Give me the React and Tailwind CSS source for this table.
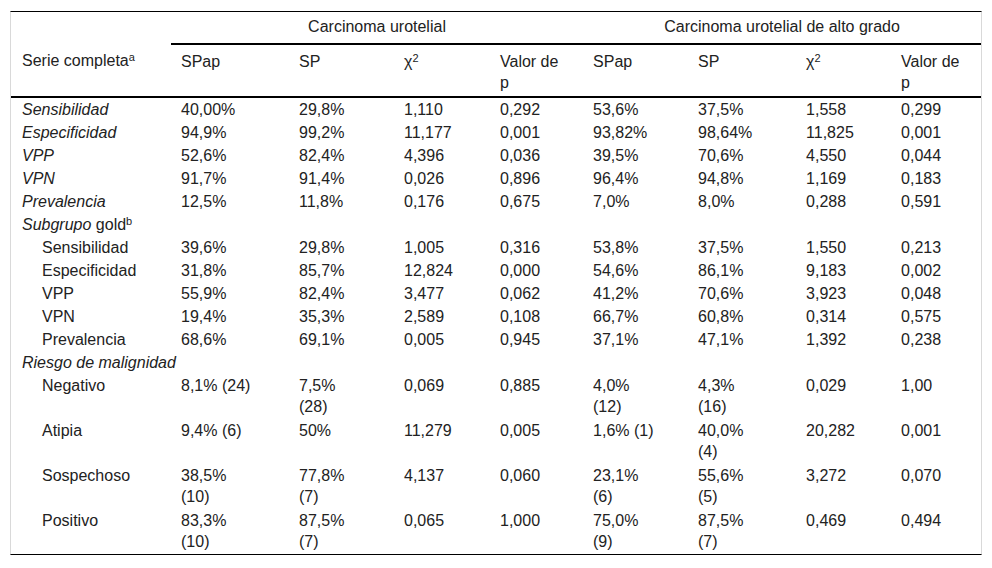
const rows = [
  { label: "Sensibilidad", it: true, v: ["40,00%", "29,8%", "1,110", "0,292", "53,6%", "37,5%", "1,558", "0,299"] },
  { label: "Especificidad", it: true, v: ["94,9%", "99,2%", "11,177", "0,001", "93,82%", "98,64%", "11,825", "0,001"] },
  { label: "VPP", it: true, v: ["52,6%", "82,4%", "4,396", "0,036", "39,5%", "70,6%", "4,550", "0,044"] },
  { label: "VPN", it: true, v: ["91,7%", "91,4%", "0,026", "0,896", "96,4%", "94,8%", "1,169", "0,183"] },
  { label: "Prevalencia", it: true, v: ["12,5%", "11,8%", "0,176", "0,675", "7,0%", "8,0%", "0,288", "0,591"] },
  { section: "gold" },
  { label: "Sensibilidad", sub: true, v: ["39,6%", "29,8%", "1,005", "0,316", "53,8%", "37,5%", "1,550", "0,213"] },
  { label: "Especificidad", sub: true, v: ["31,8%", "85,7%", "12,824", "0,000", "54,6%", "86,1%", "9,183", "0,002"] },
  { label: "VPP", sub: true, v: ["55,9%", "82,4%", "3,477", "0,062", "41,2%", "70,6%", "3,923", "0,048"] },
  { label: "VPN", sub: true, v: ["19,4%", "35,3%", "2,589", "0,108", "66,7%", "60,8%", "0,314", "0,575"] },
  { label: "Prevalencia", sub: true, v: ["68,6%", "69,1%", "0,005", "0,945", "37,1%", "47,1%", "1,392", "0,238"] },
  { section: "riesgo" },
  { label: "Negativo", sub: true, tall: true, v: [["8,1% (24)"], ["7,5%", "(28)"], ["0,069"], ["0,885"], ["4,0%", "(12)"], ["4,3%", "(16)"], ["0,029"], ["1,00"]] },
  { label: "Atipia", sub: true, tall: true, v: [["9,4% (6)"], ["50%"], ["11,279"], ["0,005"], ["1,6% (1)"], ["40,0%", "(4)"], ["20,282"], ["0,001"]] },
  { label: "Sospechoso", sub: true, tall: true, v: [["38,5%", "(10)"], ["77,8%", "(7)"], ["4,137"], ["0,060"], ["23,1%", "(6)"], ["55,6%", "(5)"], ["3,272"], ["0,070"]] },
  { label: "Positivo", sub: true, tall: true, v: [["83,3%", "(10)"], ["87,5%", "(7)"], ["0,065"], ["1,000"], ["75,0%", "(9)"], ["87,5%", "(7)"], ["0,469"], ["0,494"]] },
];

const widths = [160, 118, 105, 96, 93, 105, 108, 95, 90];

const font = { fontFamily: '"Liberation Sans", Arial, sans-serif' };

function Sup({ children }) {
  return <sup className="text-[11px]">{children}</sup>;
}

function Chi() {
  return (
    <span>
      χ<Sup>2</Sup>
    </span>
  );
}

function Cell({ value, tall }) {
  const lines = Array.isArray(value) ? value : [value];
  return (
    <td className={`pl-[10px] align-top whitespace-nowrap text-[16px] leading-[21px] ${tall ? "pt-px pb-[2px]" : "py-px"}`}>
      {lines.map((l, i) => (
        <div key={i}>{l}</div>
      ))}
    </td>
  );
}

export default function App() {
  const sub = ["SPap", "SP", <Chi />, "Valor de|p", "SPap", "SP", <Chi />, "Valor de|p"];

  return (
    <div className="bg-white w-[992px] h-[568px] pt-[11px] pl-[10px]" style={font}>
      <div className="w-[972px] border-x border-[#d9d9d9] border-t border-t-black border-b border-b-black text-[16px] leading-[21px] text-[#222]">
        <table className="table-fixed w-[970px] border-separate border-spacing-0 text-[16px] leading-[21px] text-[#222]" style={font}>
          <colgroup>
            {widths.map((w, i) => (
              <col key={i} style={{ width: w }} />
            ))}
          </colgroup>
          <thead>
            <tr>
              <th rowSpan={2} className="font-normal text-left align-top pl-[11px] pt-[38px] border-b-2 border-black whitespace-nowrap">
                Serie completa<Sup>a</Sup>
              </th>
              <th colSpan={4} className="font-normal text-center pt-[4px] pb-[6px] border-b-2 border-black">
                Carcinoma urotelial
              </th>
              <th colSpan={4} className="font-normal text-center pt-[4px] pb-[6px] border-b-2 border-black">
                Carcinoma urotelial de alto grado
              </th>
            </tr>
            <tr>
              {sub.map((s, i) => (
                <th key={i} className="font-normal text-left align-top pl-[10px] pt-[6px] pb-[3px] border-b-2 border-black h-[53px]">
                  {typeof s === "string"
                    ? s.split("|").map((p, j) => <div key={j}>{p}</div>)
                    : s}
                </th>
              ))}
            </tr>
          </thead>
          <tbody>
            {rows.map((r, i) => {
              if (r.section === "gold") {
                return (
                  <tr key={i}>
                    <td colSpan={9} className="pl-[11px] py-px whitespace-nowrap">
                      <i>Subgrupo</i> gold<Sup>b</Sup>
                    </td>
                  </tr>
                );
              }
              if (r.section === "riesgo") {
                return (
                  <tr key={i}>
                    <td colSpan={9} className="pl-[11px] py-px whitespace-nowrap italic">
                      Riesgo de malignidad
                    </td>
                  </tr>
                );
              }
              return (
                <tr key={i}>
                  <td className={`align-top whitespace-nowrap ${r.sub ? "pl-[31px]" : "pl-[11px]"} ${r.it ? "italic" : ""} ${r.tall ? "pt-px pb-[2px]" : "py-px"}`}>
                    {r.label}
                  </td>
                  {r.v.map((v, j) => (
                    <Cell key={j} value={v} tall={r.tall} />
                  ))}
                </tr>
              );
            })}
          </tbody>
        </table>
      </div>
    </div>
  );
}
